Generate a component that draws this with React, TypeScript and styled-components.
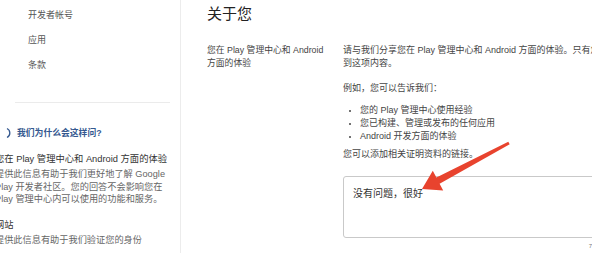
import React from "react";
import styled, { createGlobalStyle } from "styled-components";

const Global = createGlobalStyle`
  html, body { margin: 0; padding: 0; background: #fff; }
  body { font-family: "Liberation Sans", "Noto Sans CJK SC", sans-serif; color: #333; }
  * { box-sizing: border-box; }
`;

const Page = styled.div`
  position: relative;
  width: 600px;
  height: 253px;
  overflow: hidden;
  background: #fff;
`;

const Frame = styled.div`
  display: flex;
  width: 592px;
  height: 253px;
  overflow: hidden;
`;

const Sidebar = styled.aside`
  width: 181px;
  flex: none;
  border-right: 1px solid #ececec;
  overflow: hidden;
  padding-top: 9px;
`;

const NavItem = styled.div`
  padding-left: 28px;
  font-size: 9px;
  line-height: 13px;
  height: 13px;
  color: #555;
  margin-bottom: 12px;
`;

const Divider = styled.hr`
  border: none;
  border-top: 1px solid #ebebeb;
  margin: 30px 10px 0 15px;
`;

const Help = styled.div`
  margin-left: -5px;
  padding-top: 24px;
  width: 220px;
`;

const HelpHead = styled.div`
  display: flex;
  align-items: center;
  gap: 6px;
  font-size: 8.8px;
  line-height: 12px;
  font-weight: bold;
  color: #34588f;
  margin-bottom: 14px;
`;

const HelpTitle = styled.div`
  font-size: 9.3px;
  line-height: 13px;
  color: #333;
  margin-bottom: 2px;
`;

const HelpText = styled.div<{ $gap?: number }>`
  font-size: 9.2px;
  line-height: 12.6px;
  color: #666;
  margin-bottom: ${(p) => p.$gap ?? 0}px;
`;

const Main = styled.main`
  flex: 1;
  min-width: 0;
  padding: 4px 0 0 26px;
  overflow: hidden;
`;

const Heading = styled.h1`
  margin: 0;
  font-size: 15px;
  line-height: 20px;
  font-weight: normal;
  color: #222;
`;

const Row = styled.div`
  display: grid;
  grid-template-columns: 136px 260px;
  margin-top: 20px;
`;

const Label = styled.div`
  font-size: 8.8px;
  line-height: 13px;
  color: #444;
  width: 120px;
`;

const Field = styled.div`
  display: flex;
  flex-direction: column;
`;

const Para = styled.p<{ $mt?: number }>`
  margin: ${(p) => p.$mt ?? 0}px 0 0;
  font-size: 9px;
  line-height: 13px;
  color: #444;
  white-space: nowrap;
`;

const List = styled.ul`
  margin: 9px 0 0;
  padding: 0 0 0 17px;
  font-size: 9px;
  line-height: 13px;
  color: #444;
  li::marker { font-size: 7px; }
`;

const TextBox = styled.div`
  margin-top: 15px;
  height: 62px;
  width: 270px;
  border: 1px solid #c9c9c9;
  border-radius: 3px;
  padding: 10px 9px;
  font-size: 10px;
  line-height: 14px;
  color: #333;
`;

const Counter = styled.div`
  width: 249px;
  text-align: right;
  font-size: 6px;
  line-height: 8px;
  margin-top: 4px;
  color: #777;
`;

const Arrow = styled.svg`
  position: absolute;
  left: 0;
  top: 0;
  pointer-events: none;
`;

export default function App() {
  return (
    <Page>
      <Global />
      <Frame>
        <Sidebar>
          <NavItem>开发者帐号</NavItem>
          <NavItem>应用</NavItem>
          <NavItem>条款</NavItem>
          <Divider />
          <Help>
            <HelpHead>
              <svg width="16" height="12" viewBox="0 0 16 12">
                <path d="M12 1.5 A5 5 0 0 1 12 10.5" fill="none" stroke="#34588f" strokeWidth="1.3" />
              </svg>
              我们为什么会这样问?
            </HelpHead>
            <HelpTitle>您在 Play 管理中心和 Android 方面的体验</HelpTitle>
            <HelpText>提供此信息有助于我们更好地了解 Google</HelpText>
            <HelpText>Play 开发者社区。您的回答不会影响您在</HelpText>
            <HelpText $gap={13}>Play 管理中心内可以使用的功能和服务。</HelpText>
            <HelpTitle>网站</HelpTitle>
            <HelpText>提供此信息有助于我们验证您的身份</HelpText>
          </Help>
        </Sidebar>
        <Main>
          <Heading>关于您</Heading>
          <Row>
            <Label>您在 Play 管理中心和 Android 方面的体验</Label>
            <Field>
              <Para>请与我们分享您在 Play 管理中心和 Android 方面的体验。只有您能看</Para>
              <Para>到这项内容。</Para>
              <Para $mt={12}>例如，您可以告诉我们：</Para>
              <List>
                <li>您的 Play 管理中心使用经验</li>
                <li>您已构建、管理或发布的任何应用</li>
                <li>Android 开发方面的体验</li>
              </List>
              <Para $mt={5}>您可以添加相关证明资料的链接。</Para>
              <TextBox>没有问题，很好</TextBox>
              <Counter>7</Counter>
            </Field>
          </Row>
        </Main>
      </Frame>
      <Arrow width="600" height="253" viewBox="0 0 600 253">
        <polygon
          points="422,189 432.8,170.8 436.4,177.5 508.3,141.7 509.7,144.3 439.6,183.7 443.2,190.5"
          fill="#e8432e"
        />
      </Arrow>
    </Page>
  );
}
